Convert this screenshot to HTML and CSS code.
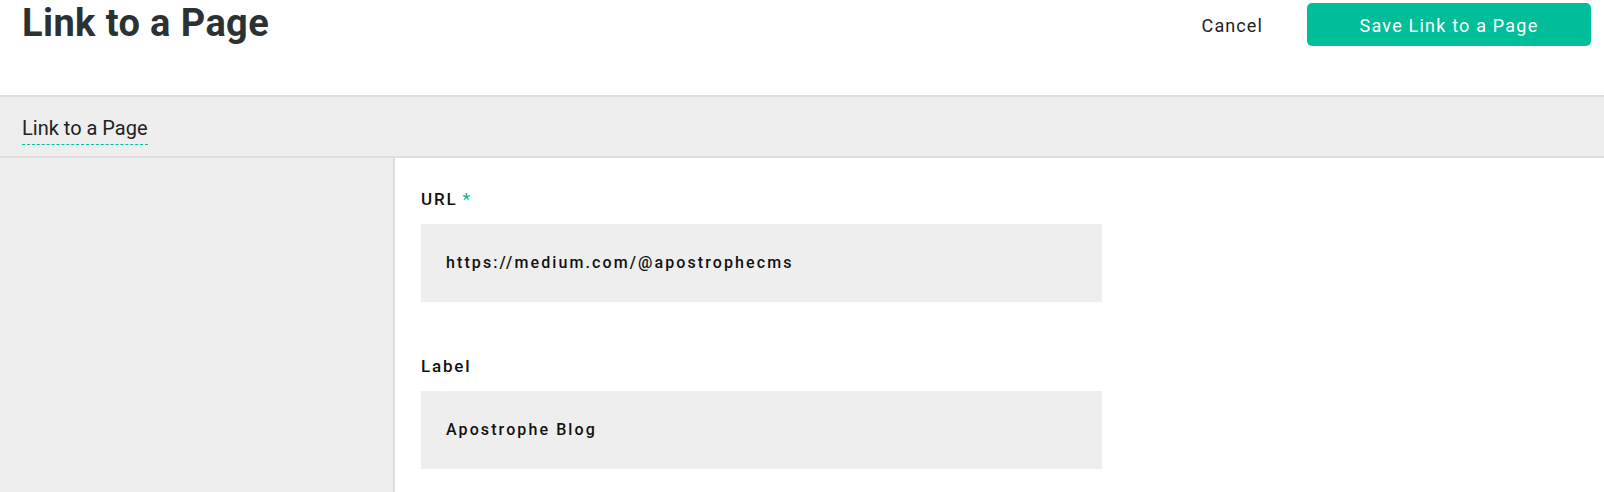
FILE: index.html
```html
<!DOCTYPE html>
<html>
<head>
<meta charset="utf-8">
<link rel="stylesheet" href="styles.css">
</head>
<body>
<div class="modal">
  <header class="modal-header">
    <h1 class="modal-title">Link to a Page</h1>
    <div class="modal-actions">
      <button class="btn-cancel">Cancel</button>
      <button class="btn-save">Save Link to a Page</button>
    </div>
  </header>
  <nav class="tabs">
    <span class="tab">Link to a Page</span>
  </nav>
  <div class="modal-body">
    <aside class="sidebar"></aside>
    <main class="fields">
      <div class="field">
        <label class="field-label">URL<span class="required">*</span></label>
        <div class="field-input">https://medium.com/@apostrophecms</div>
      </div>
      <div class="field">
        <label class="field-label">Label</label>
        <div class="field-input">Apostrophe Blog</div>
      </div>
    </main>
  </div>
</div>
</body>
</html>
```

FILE: styles.css
```css
* { box-sizing: border-box; }
html, body {
  margin: 0;
  padding: 0;
  background: #fff;
  font-family: Roboto, "Liberation Sans", sans-serif;
}
.modal {
  width: 1604px;
  height: 492px;
  display: flex;
  flex-direction: column;
  overflow: hidden;
}
.modal-header {
  height: 95px;
  flex: none;
  display: flex;
  justify-content: space-between;
  align-items: flex-start;
  padding: 0 13px 0 22px;
}
.modal-title {
  margin: 0;
  font-size: 38px;
  line-height: 46px;
  font-weight: 700;
  letter-spacing: 0.4px;
  color: #2c3233;
}
.modal-actions {
  display: flex;
  align-items: flex-start;
  padding-top: 3px;
}
.btn-cancel {
  border: none;
  background: none;
  font-family: inherit;
  font-size: 18px;
  letter-spacing: 1.1px;
  color: #222;
  height: 43px;
  padding: 2px 0 0 0;
  line-height: 41px;
  margin-right: 44px;
}
.btn-save {
  border: none;
  background: #00be9a;
  color: #fff;
  font-family: inherit;
  font-size: 18px;
  letter-spacing: 1.2px;
  width: 284px;
  height: 43px;
  padding: 2px 0 0 0;
  line-height: 41px;
  border-radius: 5px;
}
.tabs {
  flex: none;
  height: 63px;
  background: #eeeeee;
  border-top: 2px solid #dddddd;
  border-bottom: 2px solid #dddddd;
  padding: 19px 0 0 22px;
}
.tab {
  display: inline-block;
  font-size: 20px;
  line-height: 24px;
  color: #222;
  padding-bottom: 4px;
  border-bottom: 1px dashed #00be9a;
}
.modal-body {
  flex: 1;
  display: flex;
}
.sidebar {
  width: 395px;
  flex: none;
  background: #eeeeee;
  border-right: 2px solid #dddddd;
}
.fields {
  flex: 1;
  padding: 32px 0 0 26px;
}
.field {
  width: 681px;
  margin-bottom: 55px;
}
.field-label {
  display: block;
  font-size: 17px;
  line-height: 18px;
  font-weight: 500;
  letter-spacing: 1.8px;
  color: #111;
  margin-bottom: 16px;
}
.required {
  color: #00be9a;
  margin-left: 5px;
}
.field-input {
  height: 78px;
  line-height: 78px;
  background: #eeeeee;
  padding-left: 25px;
  font-size: 16px;
  font-weight: 500;
  letter-spacing: 2.1px;
  color: #111;
}
```
